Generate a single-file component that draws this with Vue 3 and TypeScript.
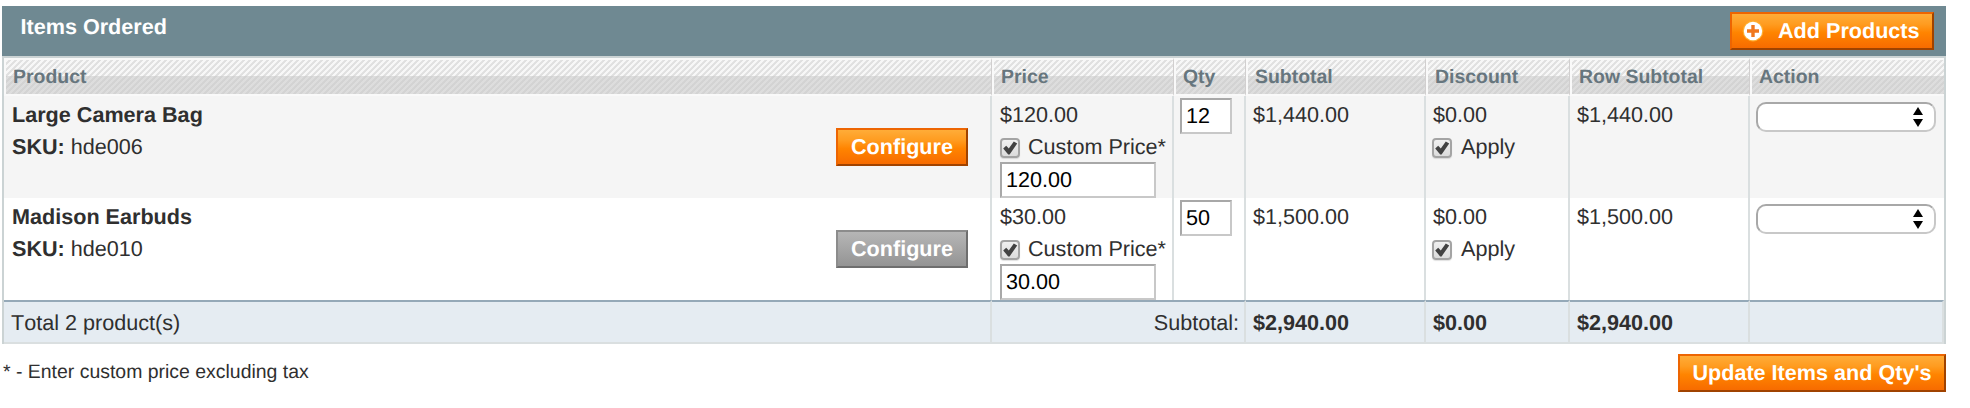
<script setup lang="ts">
import { reactive } from 'vue'

interface Item {
  name: string
  sku: string
  price: string
  customPrice: string
  qty: string
  subtotal: string
  discount: string
  configurable: boolean
  custom: boolean
  apply: boolean
}

const headings: string[] = ['Product', 'Price', 'Qty', 'Subtotal', 'Discount', 'Row Subtotal', 'Action']

const items = reactive<Item[]>([
  { name: 'Large Camera Bag', sku: 'hde006', price: '$120.00', customPrice: '120.00', qty: '12', subtotal: '$1,440.00', discount: '$0.00', configurable: true, custom: true, apply: true },
  { name: 'Madison Earbuds', sku: 'hde010', price: '$30.00', customPrice: '30.00', qty: '50', subtotal: '$1,500.00', discount: '$0.00', configurable: false, custom: true, apply: true },
])
</script>

<template>
  <section class="order-items">
    <header class="entry-head">
      <h4>Items Ordered</h4>
      <button type="button" class="btn btn-add">
        <svg class="plus" viewBox="0 0 22 22" width="22" height="22">
          <circle cx="11" cy="11" r="10.4" fill="#ffae2e" />
          <circle cx="11" cy="11" r="9.2" fill="#fff" />
          <path d="M11 5v12M5 11h12" stroke="#f0781e" stroke-width="3.4" />
        </svg>
        <span>Add Products</span>
      </button>
    </header>

    <table class="grid">
      <colgroup>
        <col class="c-product" /><col class="c-price" /><col class="c-qty" /><col class="c-sub" />
        <col class="c-disc" /><col class="c-row" /><col class="c-action" />
      </colgroup>
      <thead>
        <tr>
          <th v-for="h in headings" :key="h"><div class="hatch">{{ h }}</div></th>
        </tr>
      </thead>
      <tbody>
        <tr v-for="item in items" :key="item.sku">
          <td>
            <div class="product">
              <div>
                <div><strong>{{ item.name }}</strong></div>
                <div><strong>SKU:</strong> {{ item.sku }}</div>
              </div>
              <button type="button" class="btn btn-conf" :class="{ off: !item.configurable }">Configure</button>
            </div>
          </td>
          <td class="price">
            <div>{{ item.price }}</div>
            <label class="check">
              <input v-model="item.custom" type="checkbox" />
              <span class="box"><svg v-if="item.custom" viewBox="0 0 20 20" width="20" height="20"><path d="M3.2 10.6L6.2 7.8L8.8 10.4L13.8 3.4L17.2 5.6L9.6 16.4H8.2Z" fill="#424242" /></svg></span>
              <span>Custom Price*</span>
            </label>
            <input v-model="item.customPrice" type="text" class="field field-price" />
          </td>
          <td class="qty"><input v-model="item.qty" type="text" class="field field-qty" /></td>
          <td class="money">{{ item.subtotal }}</td>
          <td class="money">
            <div>{{ item.discount }}</div>
            <label class="check">
              <input v-model="item.apply" type="checkbox" />
              <span class="box"><svg v-if="item.apply" viewBox="0 0 20 20" width="20" height="20"><path d="M3.2 10.6L6.2 7.8L8.8 10.4L13.8 3.4L17.2 5.6L9.6 16.4H8.2Z" fill="#424242" /></svg></span>
              <span>Apply</span>
            </label>
          </td>
          <td class="money">{{ item.subtotal }}</td>
          <td class="action">
            <div class="select" role="listbox">
              <svg viewBox="0 0 10 20" width="10" height="20"><path d="M5 0L10 8H0ZM0 12H10L5 20Z" fill="#000" /></svg>
            </div>
          </td>
        </tr>
      </tbody>
      <tfoot>
        <tr>
          <td class="total">Total 2 product(s)</td>
          <td colspan="2" class="right">Subtotal:</td>
          <td class="money"><strong>$2,940.00</strong></td>
          <td class="money"><strong>$0.00</strong></td>
          <td class="money"><strong>$2,940.00</strong></td>
          <td></td>
        </tr>
      </tfoot>
    </table>

    <footer class="below">
      <p>* - Enter custom price excluding tax</p>
      <button type="button" class="btn btn-update">Update Items and Qty's</button>
    </footer>
  </section>
</template>

<style>
body { background: #fff; }
</style>

<style scoped>
.order-items {
  box-sizing: border-box;
  width: 1970px;
  height: 408px;
  padding: 6px 24px 0 2px;
  font-family: "Liberation Sans", Arial, sans-serif;
  font-size: 21.6px;
  line-height: 32px;
  color: #2f2f2f;
  text-rendering: geometricPrecision;
  font-kerning: none;
  overflow: hidden;
}
.entry-head {
  display: flex;
  justify-content: space-between;
  align-items: flex-start;
  box-sizing: border-box;
  height: 50px;
  padding: 6px 12px 0 18.5px;
  background: #6f8992;
}
.entry-head h4 {
  margin: -1px 0 0;
  font-size: 21.6px;
  line-height: 32px;
  color: #fff;
}
.btn {
  display: flex;
  align-items: center;
  justify-content: center;
  box-sizing: border-box;
  height: 38px;
  margin: 0;
  padding: 0;
  border: 2px solid;
  border-color: #ed6502 #a04300 #a04300 #ed6502;
  background: linear-gradient(#ffac38 0, #ff9c20 30%, #ff8400 55%, #f76b00 100%);
  color: #fff;
  font: bold 21.6px/32px "Liberation Sans", Arial, sans-serif;
  font-kerning: none;
  text-rendering: geometricPrecision;
  white-space: nowrap;
}
.btn-add { width: 204px; justify-content: flex-start; padding-left: 10px; gap: 14px; }
.plus { flex: none; }
.btn-conf { width: 132px; margin: 29px 22px 0 0; }
.btn-conf.off {
  border-color: #8c8c8c #6e6e6e #6e6e6e #8c8c8c;
  background: linear-gradient(#b6b6b6, #949494);
}
.btn-update { width: 268px; }

.grid {
  width: 1944px;
  table-layout: fixed;
  border-collapse: separate;
  border-spacing: 0;
  border: 2px solid #cbd3d4;
  border-bottom: 0;
}
.c-product { width: 988px; }
.c-price { width: 182px; }
.c-qty { width: 72px; }
.c-sub { width: 180px; }
.c-disc { width: 144px; }
.c-row { width: 180px; }
.c-action { width: 194px; }

th {
  height: 34px;
  padding: 0;
  border: 2px solid #f9f9f9;
  border-right: 1px solid #d1cfcf;
  font-size: 19.44px;
  text-align: left;
  color: #67767e;
}
th:last-child { border-right: 0; }
.hatch {
  height: 34px;
  padding-left: 7px;
  line-height: 34px;
  background:
    linear-gradient(transparent 16px, rgba(200, 200, 200, .55) 16px, rgba(200, 200, 200, .55)),
    repeating-linear-gradient(135deg, #f7f7f7 0, #f7f7f7 1.5px, #e0e0e0 2.2px, #e0e0e0 3.5px, #f7f7f7 4.243px);
}
tbody td {
  box-sizing: border-box;
  height: 102px;
  padding: 3px 0 0 8px;
  border-right: 2px solid #dadfe0;
  vertical-align: top;
}
tbody tr:nth-child(odd) td { background: #f5f5f5; }
tbody td.money { padding-left: 7px; }
tbody td.qty { padding: 2px 0 0 6px; }
tbody td.action { border-right: 0; padding: 6px 0 0 6px; }
.product { display: flex; justify-content: space-between; }
.check { display: flex; height: 31px; position: relative; }
.money .check { margin-left: -1px; }
.check input { position: absolute; opacity: 0; margin: 0; }
.box {
  box-sizing: border-box;
  width: 20px;
  height: 20px;
  margin: 7px 9px 0 0;
  border: 2px solid #a4a4a4;
  border-radius: 4px;
  background: linear-gradient(#f0f0f0, #dcdcdc);
  box-shadow: 0 1px 1px rgba(0, 0, 0, .12);
}
.price .box { margin-right: 8px; }
.box svg { display: block; margin: -2px; }
.field {
  display: block;
  box-sizing: border-box;
  height: 36px;
  margin: 0;
  padding: 0 4px;
  border: 2px solid;
  border-color: #a8a8a8 #c8c8c8 #c8c8c8 #a8a8a8;
  border-radius: 0;
  background: #fff;
  color: #000;
  font: 21.6px "Liberation Sans", Arial, sans-serif;
  font-kerning: none;
  text-rendering: geometricPrecision;
}
.field-price { width: 156px; }
.field-qty { width: 52px; }
.select {
  display: flex;
  align-items: center;
  justify-content: flex-end;
  box-sizing: border-box;
  width: 180px;
  height: 30px;
  padding-right: 11px;
  border: 2px solid;
  border-color: #a8a8a8 #c8c8c8 #c8c8c8 #a8a8a8;
  border-radius: 10px;
  background: #fff;
}
tfoot td {
  box-sizing: border-box;
  height: 44px;
  padding: 5px 0 3px 8px;
  border-top: 2px solid #95a9b8;
  border-right: 2px solid #dadfe0;
  border-bottom: 2px solid #dadfe0;
  background: #e5ecf2;
}
tfoot .total { padding-left: 7px; }
tfoot .money { padding-left: 7px; }
tfoot .right { text-align: right; padding-right: 5px; }
.below {
  display: flex;
  justify-content: space-between;
  padding-top: 10px;
}
.below p { margin: 2px 0 0 1px; font-size: 19.44px; }
</style>
